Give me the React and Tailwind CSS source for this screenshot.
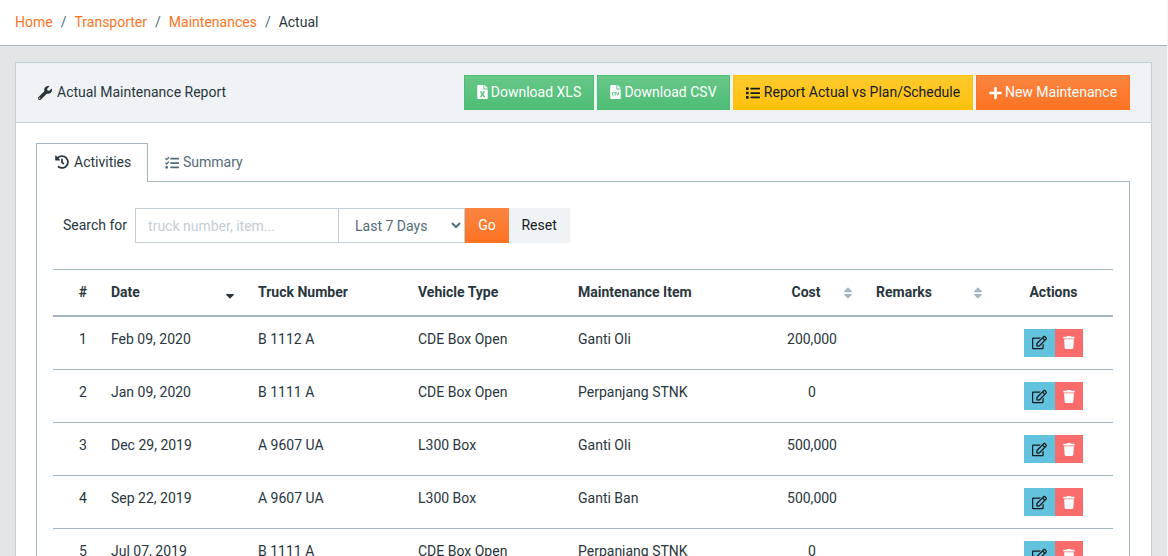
import React from "react";
import { FaWrench, FaHistory, FaTasks, FaFileExcel, FaFileCsv, FaList, FaPlus, FaRegEdit, FaTrash, FaSort, FaSortDown } from "react-icons/fa";

const rows = [
  ["1", "Feb 09, 2020", "B 1112 A", "CDE Box Open", "Ganti Oli", "200,000"],
  ["2", "Jan 09, 2020", "B 1111 A", "CDE Box Open", "Perpanjang STNK", "0"],
  ["3", "Dec 29, 2019", "A 9607 UA", "L300 Box", "Ganti Oli", "500,000"],
  ["4", "Sep 22, 2019", "A 9607 UA", "L300 Box", "Ganti Ban", "500,000"],
  ["5", "Jul 07, 2019", "B 1111 A", "CDE Box Open", "Perpanjang STNK", "0"],
];

function Crumb({ children }) {
  return <a className="text-[#fd7524]">{children}</a>;
}
function Sep() {
  return <span className="px-2 text-[#536c79]">/</span>;
}

export default function App() {
  return (
    <div className="flex h-[556px] overflow-hidden font-['Roboto',sans-serif] text-sm leading-[21px] text-[#29363d]">
      <div className="h-full min-w-0 flex-1 bg-[#e4e5e6]">
        <div className="flex h-[46px] items-center border-b border-[#a4b7c1] bg-white pl-[15px]">
          <Crumb>Home</Crumb><Sep /><Crumb>Transporter</Crumb><Sep /><Crumb>Maintenances</Crumb><Sep /><span>Actual</span>
        </div>

        <div className="mx-[15px] mt-4 w-[1137px] border border-[#c2cfd6] bg-white">
          <div className="flex h-[60px] items-center justify-between border-b border-[#c2cfd6] bg-[#f0f3f5] pr-[21px] pl-[22px]">
            <div className="flex items-center gap-[5px]">
              <FaWrench className="h-[14px] w-[14px]" />
              <span>Actual Maintenance Report</span>
            </div>
            <div className="flex gap-[3px]">
              <button className="flex h-[35px] w-[130px] items-center justify-center gap-[3px] border border-[#4dbd74] bg-linear-to-b from-[#68c789] to-[#4dbd74] text-white">
                <FaFileExcel className="-mt-[1px] h-[14px] w-[11px]" />Download XLS
              </button>
              <button className="flex h-[35px] w-[133px] items-center justify-center gap-[3px] border border-[#4dbd74] bg-linear-to-b from-[#68c789] to-[#4dbd74] text-white">
                <FaFileCsv className="-mt-[1px] h-[14px] w-[11px]" />Download CSV
              </button>
              <button className="flex h-[35px] w-[240px] items-center justify-center gap-[4px] border border-[#ffc107] bg-linear-to-b from-[#ffca2c] to-[#ffc107] text-[#151b1e]">
                <FaList className="h-[14px] w-[14px]" />Report Actual vs Plan/Schedule
              </button>
              <button className="flex h-[35px] w-[154px] items-center justify-center gap-[3px] border border-[#fd7524] bg-linear-to-b from-[#fb853f] to-[#fd7220] text-white">
                <FaPlus className="h-[14px] w-[13px]" />New Maintenance
              </button>
            </div>
          </div>

          <div className="px-5 pt-5">
            <div className="flex h-[39px]">
              <div className="relative z-10 flex h-[39px] w-[112px] items-center gap-[5px] border border-b-0 border-[#a4b7c1] bg-white pb-[2px] pl-[18px] text-[#29363d]">
                <FaHistory className="h-[14px] w-[14px]" />Activities
              </div>
              <div className="flex w-[114px] items-center gap-[4px] pl-[17px] text-[#536c79]">
                <FaTasks className="h-[14px] w-[14px]" />Summary
              </div>
            </div>
            <div className="-mt-px h-[400px] w-[1094px] border border-[#a4b7c1] px-4 pt-[26px]">
              <div className="flex h-[35px] items-center pl-[10px]">
                <span className="mr-2">Search for</span>
                <input
                  placeholder="truck number, item..."
                  className="h-[35px] w-[204px] border border-[#c2cfd6] bg-white px-3 text-sm placeholder:text-[#c2cfd6] outline-none"
                />
                <select className="-ml-px h-[35px] w-[127px] border border-[#c2cfd6] bg-white px-3 text-[#536c79]">
                  <option>Last 7 Days</option>
                </select>
                <button className="flex h-[35px] w-[44px] items-center justify-center bg-linear-to-b from-[#fb853f] to-[#fd7220] text-white">Go</button>
                <button className="flex h-[35px] w-[61px] items-center justify-center bg-[#f0f3f5] pr-[1px] text-[#151b1e]">Reset</button>
              </div>

              <table className="mt-[26px] w-[1060px] table-fixed border-collapse">
                <colgroup>
                  <col className="w-[46px]" />
                  <col className="w-[147px]" />
                  <col className="w-[160px]" />
                  <col className="w-[160px]" />
                  <col className="w-[194px]" />
                  <col className="w-[104px]" />
                  <col className="w-[129px]" />
                  <col className="w-[120px]" />
                </colgroup>
                <thead>
                  <tr className="h-[46px] border-t border-b-2 border-[#a4b7c1] font-bold">
                    <th className="pl-[14px] text-center font-bold">#</th>
                    <th className="relative px-3 text-left font-bold">
                      Date
                      <FaSortDown className="absolute top-[16px] right-[11px] h-[14px] w-[10px] text-[#29363d]" />
                    </th>
                    <th className="px-3 text-left font-bold">Truck Number</th>
                    <th className="px-3 text-left font-bold">Vehicle Type</th>
                    <th className="px-3 text-left font-bold">Maintenance Item</th>
                    <th className="relative pr-3 text-center font-bold">
                      Cost
                      <FaSort className="absolute top-[16px] right-[11px] h-[14px] w-[10px] text-[#a4b7c1]" />
                    </th>
                    <th className="relative px-3 text-left font-bold">
                      Remarks
                      <FaSort className="absolute top-[16px] right-[10px] h-[14px] w-[10px] text-[#a4b7c1]" />
                    </th>
                    <th className="pl-[1px] text-center font-bold">Actions</th>
                  </tr>
                </thead>
                <tbody>
                  {rows.map((r) => (
                    <tr key={r[0]} className="h-[53px] border-b border-[#a4b7c1] first:h-[54px]">
                      <td className="pb-[7px] pl-[14px] text-center">{r[0]}</td>
                      <td className="px-3 pb-[7px]">{r[1]}</td>
                      <td className="px-3 pb-[7px]">{r[2]}</td>
                      <td className="px-3 pb-[7px]">{r[3]}</td>
                      <td className="px-3 pb-[7px]">{r[4]}</td>
                      <td className="pb-[7px] text-center">{r[5]}</td>
                      <td />
                      <td>
                        <div className="flex justify-center">
                          <button className="flex h-[28px] w-[31px] items-center justify-center bg-[#63c2de] text-[#151b1e]">
                            <FaRegEdit className="h-[15px] w-[15px]" />
                          </button>
                          <button className="flex h-[28px] w-[28px] items-center justify-center bg-[#f86c6b] text-white">
                            <FaTrash className="h-[13px] w-[12px]" />
                          </button>
                        </div>
                      </td>
                    </tr>
                  ))}
                </tbody>
              </table>
            </div>
          </div>
        </div>
      </div>
      <div className="h-full w-px shrink-0 bg-[#f4f5f5]" />
    </div>
  );
}
